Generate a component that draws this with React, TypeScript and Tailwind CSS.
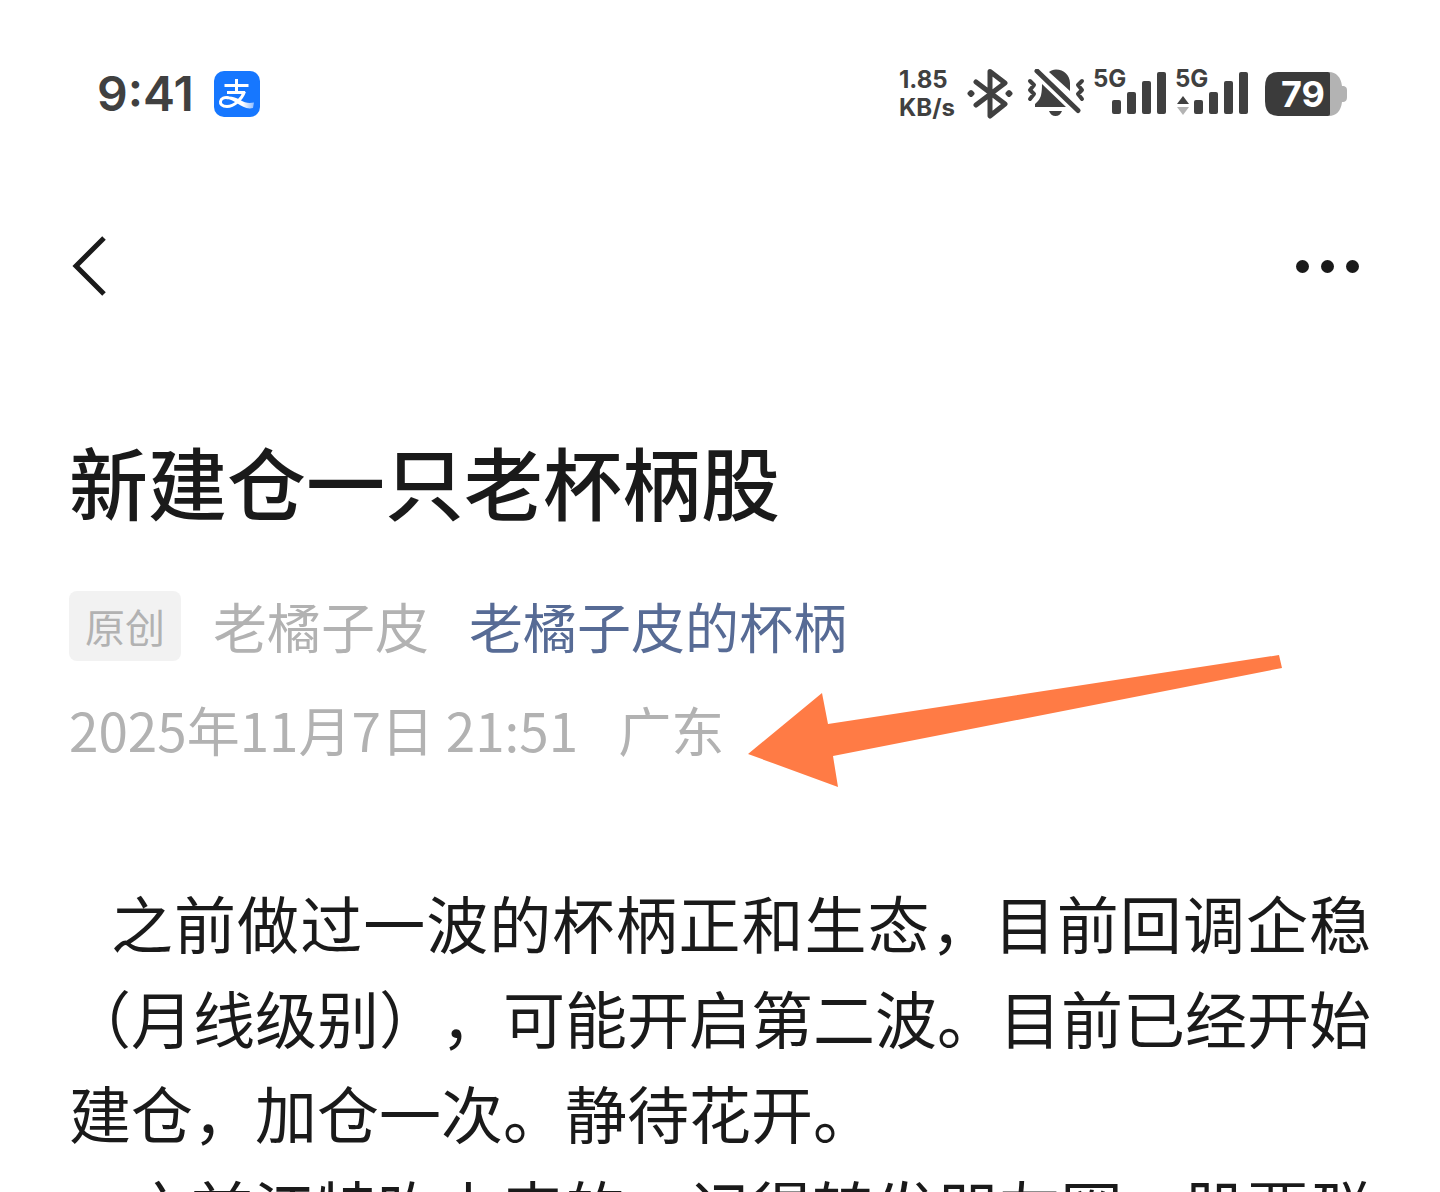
import { MouseEvent } from "react";

const paragraphs = [
  {
    indent: "indent-[42px]",
    text: "之前做过一波的杯柄正和生态，目前回调企稳（月线级别），可能开启第二波。目前已经开始建仓，加仓一次。静待花开。",
  },
  {
    indent: "indent-[60px]",
    text: "之前江特吹上来的，记得转发朋友圈，股票群里。",
  },
];

function AlipayIcon() {
  return (
    <svg viewBox="0 0 46 46" className="size-[46px]" aria-label="支付宝">
      <defs>
        <linearGradient id="ribbon" x1="0" x2="1">
          <stop offset="0.6" stopColor="#fff" />
          <stop offset="1" stopColor="#8fbcff" />
        </linearGradient>
      </defs>
      <rect width="46" height="46" rx="10" fill="#1677ff" />
      <g fill="none" stroke="#fff" strokeWidth="3">
        <path d="M10.5 14.5h24M22.5 8v13M13 21.500h18" />
        <path d="M30.500 20.500C28 28 20 35.500 13 35.500c-5 0-7-2.500-6.500-5 .6-3 4-4.500 8-3.700" />
      </g>
      <path d="M13 25.500c5-.5 9 1 13 3.500 5 3 9 3.500 14 2.500l-1 5.500c-6 1.500-11-1.500-15.500-4.500-4-2.500-7.500-4.500-11.500-4.500z" fill="url(#ribbon)" />
    </svg>
  );
}

function BluetoothIcon() {
  return (
    <svg viewBox="0 0 46 50" className="h-[50px] w-[46px]" fill="none" stroke="#404040" strokeWidth="5" strokeLinejoin="round" strokeLinecap="round">
      <path d="M9 13 38 35 23 47V2.500L38 14 9 36" />
      <path d="M4 23 5.500 24.500 4 26 2.500 24.500zM42 23l1.500 1.500L42 26l-1.500-1.500z" strokeWidth="4" />
    </svg>
  );
}

function MutedBellIcon() {
  return (
    <svg viewBox="0 0 58 50" className="h-[50px] w-[58px]">
      <path d="M22 3c2-1.500 4-2.500 7-2.500 8 0 14 6 14 13.500v8zM15 15l24 23H8v-3l3-3c3-3 4-8 4-17zM22 42h13c-1 3-3.500 5-6.500 5S23 45 22 42z" fill="#404040" />
      <g fill="none" stroke="#404040" strokeWidth="4" strokeLinecap="round" strokeLinejoin="round">
        <path d="M10 2 51 41.500" strokeWidth="5" />
        <path d="m3 12 4 4-4 5 4 4-4 5M55 12l-4 4 4 5-4 4 4 5" />
      </g>
    </svg>
  );
}

function Signal({ active = false }: { active?: boolean }) {
  return (
    <div className="relative h-[54px] w-[74px]">
      <span className="absolute top-0 left-0 text-2xl leading-6 font-bold">5G</span>
      <svg viewBox="0 0 74 54" className="h-full w-full" fill="#404040">
        <rect x="19" y="33" width="9" height="14" rx="2" />
        <rect x="34" y="25" width="9" height="22" rx="2" />
        <rect x="49" y="14" width="9" height="33" rx="2" />
        <rect x="64" y="5" width="9" height="42" rx="2" />
        {active && (
          <>
            <path d="m8 29 6 8H2z" />
            <path d="m8 48 6-8H2z" fill="#b3b3b3" />
          </>
        )}
      </svg>
    </div>
  );
}

function Battery({ level }: { level: number }) {
  return (
    <div className="relative h-11 w-[82px]">
      <svg viewBox="0 0 82 44" className="h-full w-full">
        <path d="M64 0c7 0 12 5 13 14 4 0 5 2 5 4v7c0 3-1 5-5 5-1 9-6 14-13 14z" fill="#b3b3b3" />
        <path d="M13 0h50q2 0 2 2v40q0 2-2 2H13Q0 44 0 29V15Q0 0 13 0z" fill="#3b3b3b" />
      </svg>
      <span className="absolute inset-y-0 left-4 text-4xl leading-11 font-bold text-white">{level}</span>
    </div>
  );
}

function StatusBar() {
  return (
    <div className="flex h-[187px] items-center justify-between pr-6 pl-7 font-[Inter] text-[#404040]">
      <div className="flex items-center gap-5">
        <span className="text-5xl font-semibold">9:41</span>
        <AlipayIcon />
      </div>
      <div className="flex items-center">
        <div className="mr-2.5 w-[58px] text-2xl leading-7 font-bold">
          1.85
          <br />
          KB/s
        </div>
        <BluetoothIcon />
        <div className="ml-3.5 flex items-center gap-2">
          <MutedBellIcon />
          <Signal />
          <Signal active />
        </div>
        <div className="ml-4">
          <Battery level={79} />
        </div>
      </div>
    </div>
  );
}

export default function App() {
  const stay = (e: MouseEvent) => e.preventDefault();

  return (
    <main
      lang="zh-CN"
      className="h-screen overflow-hidden bg-white px-[69px] font-['Noto_Sans_CJK_SC',sans-serif] text-[#1a1a1a] [text-spacing-trim:space-all]"
    >
      <StatusBar />

      <nav className="flex h-[158px] items-center justify-between">
        <button type="button" aria-label="返回">
          <svg viewBox="0 0 38 60" className="h-[60px] w-[38px]" fill="none" stroke="#1a1a1a" strokeWidth="5">
            <path d="M35 2 7 30l28 28" />
          </svg>
        </button>
        <button type="button" aria-label="更多" className="flex gap-3 pr-3">
          <span className="size-[13px] rounded-full bg-[#1a1a1a]" />
          <span className="size-[13px] rounded-full bg-[#1a1a1a]" />
          <span className="size-[13px] rounded-full bg-[#1a1a1a]" />
        </button>
      </nav>

      <article className="relative pt-[82px]">
        <h1 className="text-[79px] leading-[108px] font-medium">新建仓一只老杯柄股</h1>

        <div className="mt-14 flex items-center text-[54px] leading-[70px] text-[#b2b2b2]">
          <span className="rounded-lg bg-[#f2f2f2] px-4 text-[40px]">原创</span>
          <span className="ml-8">老橘子皮</span>
          <a href="#" onClick={stay} className="ml-10 text-[#576b95]">
            老橘子皮的杯柄
          </a>
        </div>

        <div className="mt-8 flex text-[53px] leading-[72px] text-[#b2b2b2]">
          <time dateTime="2025-11-07T21:51">2025年11月7日 21:51</time>
          <span className="ml-10">广东</span>
        </div>

        <svg viewBox="0 0 534 132" className="absolute top-[310px] left-[679px] h-[132px] w-[534px]" fill="#ff7b45">
          <path d="M0 99 74 38 80 69 531 0 534 13 85 101 90 132z" />
        </svg>

        <div className="mt-[110px] text-justify text-[62px] leading-[95px]">
          {paragraphs.map((p) => (
            <p key={p.text} className={p.indent}>
              {p.text}
            </p>
          ))}
        </div>
      </article>
    </main>
  );
}
